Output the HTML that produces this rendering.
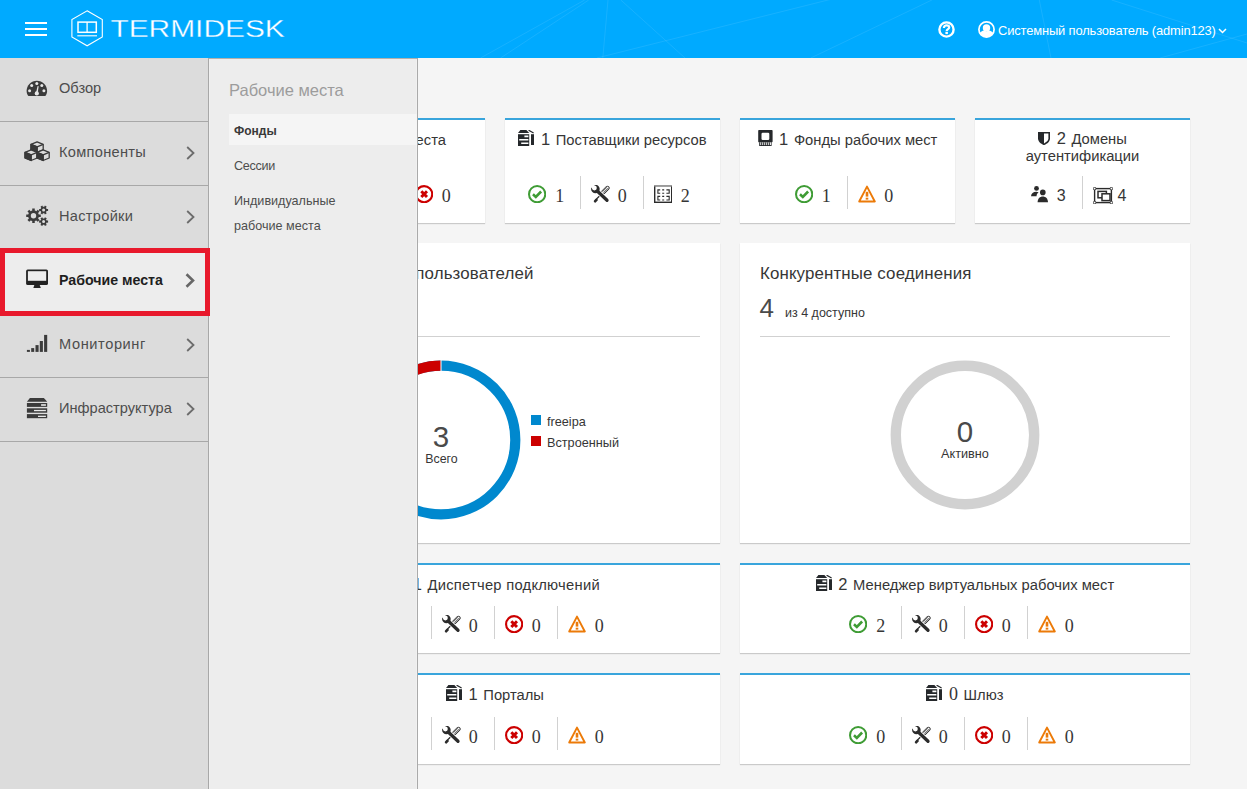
<!DOCTYPE html>
<html lang="ru">
<head>
<meta charset="utf-8">
<title>Termidesk</title>
<style>
*{box-sizing:border-box;margin:0;padding:0}
html,body{width:1247px;height:789px;overflow:hidden}
body{background:#f5f5f5;font-family:"Liberation Sans",sans-serif;color:#363636;position:relative;font-size:14px}
.abs{position:absolute}
/* header */
#hdr{position:absolute;left:0;top:0;width:1247px;height:58px;background:#00aaff;overflow:hidden}
#hdr .burger{position:absolute;left:25px;top:22px;width:22px;height:14px}
#hdr .burger i{position:absolute;left:0;width:22px;height:2px;background:#fff}
#hdr .user{position:absolute;left:998px;top:22px;color:#fff;font-size:12.900px;line-height:18px;white-space:nowrap;letter-spacing:-.13px}
/* sidebar */
#side{position:absolute;left:0;top:58px;width:209px;height:731px;background:#dcdcdc;border-right:1px solid #a8a8a8}
#side .it{position:absolute;left:0;width:208px;height:64px;border-bottom:1px solid #a8a8a8}
#side .it span{position:absolute;left:59px;top:19px;line-height:22px;font-size:14.6px;color:#4d4d4d;white-space:nowrap}
#side .it.act{background:#ededed}
#side .it.act span{font-weight:bold;color:#1e1e1e;font-size:14.2px}
#side .it svg.ic{position:absolute;left:25px;top:19px}
#side .it svg.ch{position:absolute;left:186px;top:24px}
#redbox{position:absolute;left:0;top:248px;width:210px;height:68px;border:5px solid #e8192c}
/* flyout */
#fly{position:absolute;left:209px;top:58px;width:209px;height:731px;background:#ededed;border-right:1px solid #aaa;box-shadow:inset 0 1px 0 #b4b0ac,inset -1px 0 0 #f1f1f1,inset 1px 0 0 #f1f1f1}
#fly h3{position:absolute;left:20px;top:21px;font-weight:normal;font-size:16.5px;line-height:22px;color:#9c9c9c;white-space:nowrap}
#fly .fi{position:absolute;left:20px;width:188px;font-size:12.6px;line-height:25px;color:#4d4d4d;padding-left:5px}
#fly .fi.sel{background:#f5f5f5;font-weight:bold;color:#393939}
/* main */
#main{position:absolute;left:418px;top:58px;width:829px;height:731px;overflow:hidden}
#main .in{position:absolute;left:-418px;top:-58px;width:1247px;height:789px}
.card{position:absolute;background:#fff;box-shadow:0 1px 1px rgba(3,3,3,.175)}
.card.acc{border-top:2px solid #39a5dc}
.card .t{position:absolute;left:0;right:0;text-align:center;font-size:14.75px;line-height:17px;color:#363636;white-space:nowrap}
.card .t b{font-weight:normal;font-size:16.500px;margin-right:1.500px}

.t svg{vertical-align:baseline;position:relative;top:1px;margin-right:6.500px}
.cnt{position:absolute;left:-1px;right:0;display:flex;justify-content:center;height:33px}
.n{position:relative;width:63px;height:33px;border-left:1px solid #d1d1d1}
.n:first-child{width:62px;border-left:0}
.n svg{position:absolute;left:10px;top:9px}
.n:first-child svg{left:10px}
.n span{position:absolute;left:36.800px;top:9px;font-family:"Liberation Serif",serif;font-size:18px;line-height:22px;color:#363636}
.n:first-child span{left:37.300px}
.n span.ss{font-family:"Liberation Sans",sans-serif;font-size:16px;top:8.700px}
.big{position:absolute;font-size:16.9px;letter-spacing:.12px;line-height:22px;color:#363636;white-space:nowrap}
.hr{position:absolute;height:1px;background:#d1d1d1}
.lt{font-weight:normal;color:#4a4a4a}
</style>
</head>
<body>
<svg width="0" height="0" style="position:absolute">
<defs>
<symbol id="i-ok" viewBox="0 0 18 18"><circle cx="9" cy="9" r="8" fill="none" stroke="#3f9c35" stroke-width="2"/><path d="M4.900 9.100l2.800 2.700 5.200-5.400" fill="none" stroke="#3f9c35" stroke-width="2.500"/></symbol>
<symbol id="i-err" viewBox="0 0 18 18"><circle cx="9" cy="9" r="7.950" fill="none" stroke="#cc0000" stroke-width="2.100"/><path d="M6.200 6.200l5.600 5.600M11.800 6.200l-5.600 5.600" fill="none" stroke="#cc0000" stroke-width="2.900"/></symbol>
<symbol id="i-warn" viewBox="0 0 18 18"><path d="M9 1.600L16.800 16.500H1.200Z" fill="none" stroke="#ec7a08" stroke-width="1.900" stroke-linejoin="round"/><path d="M9 6.800v4.800" stroke="#ec7a08" stroke-width="2.600" fill="none"/><rect x="7.700" y="12.700" width="2.600" height="1.900" fill="#ec7a08"/></symbol>
<symbol id="i-tools" viewBox="0 0 19 18"><g stroke-linecap="round" fill="none"><path d="M11.500 8L5 14.500" stroke="#2b2b2b" stroke-width="1.300"/><path d="M5.400 14.900L4.200 16.200" stroke="#2b2b2b" stroke-width="2.700"/><path d="M12.400 7L16.400 3" stroke="#2b2b2b" stroke-width="4.400"/><path d="M12.300 7.100L16.300 3.100" stroke="#fff" stroke-width="2.800"/><path d="M11.600 6.500L15.600 2.500M12.500 7.400L16.500 3.400M13.400 8.300L17.200 4.500" stroke="#2b2b2b" stroke-width=".7"/><path d="M6.500 6.200L16 15.300" stroke="#fff" stroke-width="5"/><path d="M6.500 6.200L16 15.300" stroke="#2b2b2b" stroke-width="3.300"/></g><circle cx="4.400" cy="4" r="4.300" fill="#2b2b2b"/><circle cx="3.400" cy="3" r="2.400" fill="#fff"/><path d="M3.600 3.200L-1 -1.400" stroke="#fff" stroke-width="3.600" fill="none"/></symbol>
<symbol id="i-table" viewBox="0 0 18.400 18"><rect x=".7" y=".7" width="17" height="16.600" fill="none" stroke="#2b2b2b" stroke-width="1.400"/><path d="M0 .8h18.400" stroke="#9a9a9a" stroke-width="1.600"/><path d="M6.200 4.900H3.900V8.200H6.200M8.200 4.900h2M8.200 8.200h2M12.400 4.900H15.200V8.200H12.400M6.200 11.400H3.900V15H6.200M8.200 11.400h2M8.200 15h2M12.400 11.400H15.200V15H12.400" fill="none" stroke="#2b2b2b" stroke-width="1.100"/></symbol>
<symbol id="i-srv" viewBox="0 0 16 16"><path d="M2.400 0h6l2.800 3H0z" fill="#25282b"/><path d="M0 4.200h11.200V16H0z" fill="#25282b"/><path d="M6.400 5.400h4v1.800h-4zM1.200 9h9.200v1.600H1.200zM3.200 12.400h7.200V14H3.200z" fill="#fff"/><path d="M10.600 .2L15.600 3" stroke="#25282b" stroke-width="1.200" fill="none"/><path d="M13 4.200h3V15h-3z" fill="#25282b"/></symbol>
<symbol id="i-mem" viewBox="0 0 15 16"><rect x=".2" y="0" width="14.400" height="12.400" rx=".8" fill="#25282b"/><rect x="3.500" y="2.700" width="7.800" height="7.200" rx="1.200" fill="#fff"/><path d="M1.200 12.400h12.400V16H1.200z" fill="#25282b"/><path d="M2.700 12.400v2.700M4.700 12.400v2.700M6.700 12.400v2.700M8.700 12.400v2.700M10.700 12.400v2.700M12.500 12.400v2.700" stroke="#fff" stroke-width=".9"/></symbol>
<symbol id="i-shield" viewBox="0 0 12 13.200"><path d="M0 0h12v6.500c0 3.200-3 5.300-6 6.700-3-1.400-6-3.500-6-6.700z" fill="#25282b"/><path d="M6 1.600h4.400v5c0 2-1.900 3.500-4.400 4.800z" fill="#fff"/></symbol>
<symbol id="i-users" viewBox="0 0 17 16.600"><circle cx="5.500" cy="2.400" r="2.400" fill="#2b2b2b"/><path d="M0 10.200c.3-2.800 2.200-4.400 5.200-4.400.9 0 1.700.2 2.400.5-1.600 1-2.100 2.800-2 3.900z" fill="#2b2b2b"/><circle cx="11.800" cy="6.400" r="2.800" fill="#2b2b2b"/><path d="M6.600 16.600c0-4 2.300-6 5.200-6s5.200 2 5.200 6z" fill="#2b2b2b"/></symbol>
<symbol id="i-vm" viewBox="0 0 20 17.200"><rect x="1.600" y="1.600" width="16.800" height="14" fill="none" stroke="#2b2b2b" stroke-width="1.400"/><g fill="#fff" stroke="#2b2b2b" stroke-width=".9"><circle cx="1.600" cy="1.600" r="1.300"/><circle cx="18.400" cy="1.600" r="1.300"/><circle cx="1.600" cy="15.600" r="1.300"/><circle cx="18.400" cy="15.600" r="1.300"/></g><rect x="5" y="4.400" width="8.400" height="6.400" fill="none" stroke="#2b2b2b" stroke-width="1.500"/><rect x="9" y="6.800" width="8" height="6.800" fill="#fff" stroke="#2b2b2b" stroke-width="1.500"/></symbol>
<symbol id="i-chev" viewBox="0 0 9 14"><path d="M1.200 1l6.300 6-6.300 6" fill="none" stroke="#6c6c6c" stroke-width="1.800"/></symbol>
</defs>
</svg>

<div id="main"><div class="in">

<div class="card acc" style="left:270px;top:118px;width:215px;height:105px">
  <div class="t" style="top:9px;left:-3px"><svg width="16" height="16"><use href="#i-srv"/></svg><b>3</b> Рабочие места</div>
  <div class="cnt" style="top:56px;left:-9px"><div class="n"><svg width="18.300" height="18.300"><use href="#i-ok"/></svg><span>3</span></div><div class="n"><svg width="19" height="18"><use href="#i-tools"/></svg><span>0</span></div><div class="n"><svg width="18.300" height="18.300"><use href="#i-err"/></svg><span>0</span></div></div>
</div>
<div class="card acc" style="left:505px;top:118px;width:215px;height:105px">
  <div class="t" style="top:9px"><svg width="16" height="16"><use href="#i-srv"/></svg><b>1</b> Поставщики ресурсов</div>
  <div class="cnt" style="top:56px"><div class="n"><svg width="18.300" height="18.300"><use href="#i-ok"/></svg><span>1</span></div><div class="n"><svg width="19" height="18"><use href="#i-tools"/></svg><span>0</span></div><div class="n"><svg width="18.400" height="18" style="top:9px"><use href="#i-table"/></svg><span>2</span></div></div>
</div>
<div class="card acc" style="left:740px;top:118px;width:215px;height:105px">
  <div class="t" style="top:9px"><svg width="15" height="16"><use href="#i-mem"/></svg><b>1</b> Фонды рабочих мест</div>
  <div class="cnt" style="top:56px"><div class="n"><svg width="18.300" height="18.300"><use href="#i-ok"/></svg><span>1</span></div><div class="n"><svg width="18" height="18" style="top:8.500px"><use href="#i-warn"/></svg><span>0</span></div></div>
</div>
<div class="card acc" style="left:975px;top:118px;width:215px;height:105px">
  <div class="t" style="top:10px"><svg width="12" height="13.200"><use href="#i-shield"/></svg><b>2</b> Домены<br>аутентификации</div>
  <div class="cnt" style="top:56px"><div class="n"><svg width="17" height="16.600" style="left:11px;top:10.400px"><use href="#i-users"/></svg><span class="ss">3</span></div><div class="n"><svg width="20" height="17.200" style="left:10.500px;top:11px"><use href="#i-vm"/></svg><span class="ss" style="left:35px">4</span></div></div>
</div>

<div class="card" style="left:270px;top:243px;width:450px;height:300px">
  <div class="big" style="right:186.500px;top:20px">Распределение пользователей</div>
  <div class="hr" style="left:20px;top:93px;width:410px"></div>
  <svg class="abs" style="left:91px;top:117px" width="160" height="160" viewBox="-80 -80 160 160">
    <circle r="74.300" fill="none" stroke="#0088ce" stroke-width="10.200"/>
    <path d="M0 -74.300A74.300 74.300 0 0 0 -64.350 37.150" fill="none" stroke="#cc0000" stroke-width="10.200"/>
    <path d="M0 -80v14" stroke="#fff" stroke-width="1"/>
  </svg>
  <div class="abs lt" style="left:141px;top:178px;width:60px;text-align:center;font-size:29.500px;line-height:32px">3</div>
  <div class="abs" style="left:141.500px;top:209px;width:60px;text-align:center;font-size:12.400px;line-height:14px">Всего</div>
  <div class="abs" style="left:261px;top:172px;width:10px;height:10px;background:#0088ce"></div>
  <div class="abs" style="left:277px;top:172px;font-size:12.700px;line-height:14px">freeipa</div>
  <div class="abs" style="left:261px;top:193px;width:10px;height:10px;background:#cc0000"></div>
  <div class="abs" style="left:277px;top:193px;font-size:12.700px;line-height:14px">Встроенный</div>
</div>
<div class="card" style="left:740px;top:243px;width:450px;height:300px">
  <div class="big" style="left:20px;top:20px">Конкурентные соединения</div>
  <div class="abs lt" style="left:19.500px;top:49.500px;font-size:26px;line-height:30px">4</div>
  <div class="abs" style="left:45px;top:62.700px;font-size:12.500px;line-height:14px;white-space:nowrap">из 4 доступно</div>
  <div class="hr" style="left:20px;top:93px;width:410px"></div>
  <svg class="abs" style="left:150px;top:117px" width="150" height="150" viewBox="-75 -75 150 150">
    <circle r="69.200" fill="none" stroke="#d1d1d1" stroke-width="10.400"/>
  </svg>
  <div class="abs lt" style="left:195px;top:172.800px;width:60px;text-align:center;font-size:29.500px;line-height:32px">0</div>
  <div class="abs" style="left:185px;top:204px;width:80px;text-align:center;font-size:12.700px;line-height:14px">Активно</div>
</div>

<div class="card acc" style="left:270px;top:563px;width:450px;height:90px">
  <div class="t" style="top:9px"><svg width="16" height="16"><use href="#i-srv"/></svg><b>1</b> <span style="letter-spacing:.25px">Диспетчер подключений</span></div>
  <div class="cnt" style="top:41px"><div class="n"><svg width="18.300" height="18.300"><use href="#i-ok"/></svg><span>1</span></div><div class="n"><svg width="19" height="18"><use href="#i-tools"/></svg><span>0</span></div><div class="n"><svg width="18.300" height="18.300"><use href="#i-err"/></svg><span>0</span></div><div class="n"><svg width="18" height="18" style="top:8.500px"><use href="#i-warn"/></svg><span>0</span></div></div>
</div>
<div class="card acc" style="left:740px;top:563px;width:450px;height:90px">
  <div class="t" style="top:9px"><svg width="16" height="16"><use href="#i-srv"/></svg><b>2</b> Менеджер виртуальных рабочих мест</div>
  <div class="cnt" style="top:41px"><div class="n"><svg width="18.300" height="18.300"><use href="#i-ok"/></svg><span>2</span></div><div class="n"><svg width="19" height="18"><use href="#i-tools"/></svg><span>0</span></div><div class="n"><svg width="18.300" height="18.300"><use href="#i-err"/></svg><span>0</span></div><div class="n"><svg width="18" height="18" style="top:8.500px"><use href="#i-warn"/></svg><span>0</span></div></div>
</div>
<div class="card acc" style="left:270px;top:673px;width:450px;height:91px">
  <div class="t" style="top:9px"><svg width="16" height="16"><use href="#i-srv"/></svg><b>1</b> Порталы</div>
  <div class="cnt" style="top:42px"><div class="n"><svg width="18.300" height="18.300"><use href="#i-ok"/></svg><span>1</span></div><div class="n"><svg width="19" height="18"><use href="#i-tools"/></svg><span>0</span></div><div class="n"><svg width="18.300" height="18.300"><use href="#i-err"/></svg><span>0</span></div><div class="n"><svg width="18" height="18" style="top:8.500px"><use href="#i-warn"/></svg><span>0</span></div></div>
</div>
<div class="card acc" style="left:740px;top:673px;width:450px;height:91px">
  <div class="t" style="top:9px"><svg width="16" height="16"><use href="#i-srv"/></svg><b style="font-family:'Liberation Serif',serif;font-size:18px">0</b> Шлюз</div>
  <div class="cnt" style="top:42px"><div class="n"><svg width="18.300" height="18.300"><use href="#i-ok"/></svg><span>0</span></div><div class="n"><svg width="19" height="18"><use href="#i-tools"/></svg><span>0</span></div><div class="n"><svg width="18.300" height="18.300"><use href="#i-err"/></svg><span>0</span></div><div class="n"><svg width="18" height="18" style="top:8.500px"><use href="#i-warn"/></svg><span>0</span></div></div>
</div>

</div></div>

<div id="hdr">
  <div class="burger"><i style="top:0"></i><i style="top:6px"></i><i style="top:12px"></i></div>
  <svg class="abs" style="left:66px;top:6px" width="230" height="46" viewBox="66 6 230 46">
    <path d="M87.100 10.800L102.300 19.500V37L87.100 45.800L71.900 37V19.500Z" fill="none" stroke="#fff" stroke-width="1.100"/>
    <rect x="78" y="22.100" width="18.300" height="10.200" fill="none" stroke="#fff" stroke-width="1.500"/>
    <path d="M87.100 22v10.400" stroke="#fff" stroke-width="1.300"/>
    <path d="M77.300 35.800h19.700" stroke="#fff" stroke-width="1.100"/>
    <text x="110.400" y="36.800" font-family="Liberation Sans, sans-serif" font-size="23" fill="#fff" stroke="#00aaff" stroke-width=".3" textLength="174.400" lengthAdjust="spacingAndGlyphs">TERMIDESK</text>
  </svg>
  <svg class="abs" style="left:938px;top:21px" width="17" height="17" viewBox="0 0 17 17"><circle cx="8.500" cy="8.500" r="7.100" fill="none" stroke="#fff" stroke-width="2.400"/><path d="M5.900 6.900c0-1.500 1.100-2.500 2.700-2.500s2.600.9 2.600 2.200c0 1.600-2.500 1.500-2.500 3.300" fill="none" stroke="#fff" stroke-width="2.200"/><rect x="7.400" y="10.800" width="2.500" height="2.300" fill="#fff"/></svg>
  <svg class="abs" style="left:978px;top:21px" width="17" height="17" viewBox="0 0 17 17"><circle cx="8.500" cy="8.500" r="7.600" fill="none" stroke="#fff" stroke-width="1.700"/><circle cx="8.500" cy="6.900" r="3.700" fill="#fff"/><path d="M2 11.700c1-1.100 2.500-1.800 4-2.200 1.500.9 3.500.9 5 0 1.500.4 3 1.100 4 2.200-1.200 2.800-3.600 4.500-6.500 4.500s-5.300-1.700-6.500-4.500z" fill="#fff"/></svg>
  <svg class="abs" style="left:1218px;top:28px" width="9" height="6" viewBox="0 0 9 6"><path d="M1 1l3.500 3.500L8 1" fill="none" stroke="#fff" stroke-width="1.500"/></svg>
  <svg class="abs" style="left:300px;top:0" width="947" height="58" viewBox="300 0 947 58"><g stroke="#fff" stroke-opacity=".09" stroke-width="1" fill="none"><path d="M480.500 58L584.700 0M500.500 58L588.700 0M602.800 58L608 0M620.800 0L685 58M596.800 58L840 -3M810.800 58L931.900 0M1039.300 0L1051 58M1111.600 0L1247 43M1160 58L1247 34"/></g></svg>
  <div class="user">Системный пользователь (admin123)</div>
</div>

<div id="side">
  <div class="it" style="top:0"><svg class="abs" style="left:26px;top:22px" width="22" height="17" viewBox="-0.600 -0.800 22 17"><path d="M1.800 15.200C.700 13.800 0 12.100 0 10.200 0 4.600 4.600 0 10.250 0S20.500 4.600 20.500 10.200c0 1.900-.700 3.600-1.800 5z" fill="#3b3b3b"/><g fill="#e8e8e8"><circle cx="3" cy="9.900" r="1.500"/><circle cx="5.100" cy="4.800" r="1.500"/><circle cx="10.200" cy="2.700" r="1.500"/><circle cx="15.200" cy="4.800" r="1.500"/><circle cx="17.300" cy="9.900" r="1.500"/><circle cx="10.200" cy="12.600" r="2.100"/><path d="M9.300 12.400l1.700-7.200 1.100.3-1.100 7.200z"/></g></svg><span>Обзор</span></div>
  <div class="it" style="top:64px"><svg class="abs" style="left:24px;top:19px" width="26" height="22" viewBox="-0.900 -0.800 26 22"><path d="M12.2 0L18.299999999999997 2.5V8.1L12.2 10.6L6.1 8.1V2.5Z" fill="#dcdcdc" stroke="#393939" stroke-width="1.300" stroke-linejoin="round"/><path d="M6.1 2.5L12.2 5.0V10.6L6.1 8.1Z" fill="#393939" stroke="#393939" stroke-width="1.300" stroke-linejoin="round"/><path d="M6.1 2.5L12.2 5.0L18.299999999999997 2.5M12.2 5.0V10.6" fill="none" stroke="#393939" stroke-width="1.300" stroke-linejoin="round"/><path d="M6.2 8.1L12.3 10.6V16.2L6.2 18.7L0.10000000000000053 16.2V10.6Z" fill="#dcdcdc" stroke="#393939" stroke-width="1.300" stroke-linejoin="round"/><path d="M0.10000000000000053 10.6L6.2 13.1V18.7L0.10000000000000053 16.2Z" fill="#393939" stroke="#393939" stroke-width="1.300" stroke-linejoin="round"/><path d="M0.10000000000000053 10.6L6.2 13.1L12.3 10.6M6.2 13.1V18.7" fill="none" stroke="#393939" stroke-width="1.300" stroke-linejoin="round"/><path d="M18.2 8.1L24.299999999999997 10.6V16.2L18.2 18.7L12.1 16.2V10.6Z" fill="#dcdcdc" stroke="#393939" stroke-width="1.300" stroke-linejoin="round"/><path d="M12.1 10.6L18.2 13.1V18.7L12.1 16.2Z" fill="#393939" stroke="#393939" stroke-width="1.300" stroke-linejoin="round"/><path d="M12.1 10.6L18.2 13.1L24.299999999999997 10.6M18.2 13.1V18.7" fill="none" stroke="#393939" stroke-width="1.300" stroke-linejoin="round"/></svg><span style="letter-spacing:.3px">Компоненты</span><svg class="ch" width="9" height="14"><use href="#i-chev"/></svg></div>
  <div class="it" style="top:128px"><svg class="abs" style="left:25px;top:19px" width="24" height="22" viewBox="25 205 24 22"><path fill-rule="evenodd" fill="#3b3b3b" d="M38.49 213.73L38.75 214.54L40.79 214.53L40.79 217.07L38.75 217.06L38.49 217.87L38.10 218.62L39.55 220.06L37.76 221.85L36.32 220.40L35.57 220.79L34.76 221.05L34.77 223.09L32.23 223.09L32.24 221.05L31.43 220.79L30.68 220.40L29.24 221.85L27.45 220.06L28.90 218.62L28.51 217.87L28.25 217.06L26.21 217.07L26.21 214.53L28.25 214.54L28.51 213.73L28.90 212.98L27.45 211.54L29.24 209.75L30.68 211.20L31.43 210.81L32.24 210.55L32.23 208.51L34.77 208.51L34.76 210.55L35.57 210.81L36.32 211.20L37.76 209.75L39.55 211.54L38.10 212.98ZM36.20 215.80A2.7 2.7 0 1 0 30.80 215.80A2.7 2.7 0 1 0 36.20 215.80ZM46.37 208.40L46.64 209.01L48.08 208.95L48.08 211.05L46.64 210.99L46.37 211.60L45.98 212.14L46.75 213.35L44.93 214.40L44.27 213.13L43.60 213.20L42.93 213.13L42.27 214.40L40.45 213.35L41.22 212.14L40.83 211.60L40.56 210.99L39.12 211.05L39.12 208.95L40.56 209.01L40.83 208.40L41.22 207.86L40.45 206.65L42.27 205.60L42.93 206.87L43.60 206.80L44.27 206.87L44.93 205.60L46.75 206.65L45.98 207.86ZM45.10 210.00A1.5 1.5 0 1 0 42.10 210.00A1.5 1.5 0 1 0 45.10 210.00ZM46.37 220.00L46.64 220.61L48.08 220.55L48.08 222.65L46.64 222.59L46.37 223.20L45.98 223.74L46.75 224.95L44.93 226.00L44.27 224.73L43.60 224.80L42.93 224.73L42.27 226.00L40.45 224.95L41.22 223.74L40.83 223.20L40.56 222.59L39.12 222.65L39.12 220.55L40.56 220.61L40.83 220.00L41.22 219.46L40.45 218.25L42.27 217.20L42.93 218.47L43.60 218.40L44.27 218.47L44.93 217.20L46.75 218.25L45.98 219.46ZM45.10 221.60A1.5 1.5 0 1 0 42.10 221.60A1.5 1.5 0 1 0 45.10 221.60Z"/></svg><span style="letter-spacing:.3px">Настройки</span><svg class="ch" width="9" height="14"><use href="#i-chev"/></svg></div>
  <div class="it act" style="top:192px"><svg class="abs" style="left:26px;top:19px" width="23" height="20" viewBox="26 269 23 20"><rect x="26.100" y="269.600" width="21.900" height="15.500" rx="1.600" fill="#222"/><rect x="27.900" y="271.200" width="18.300" height="9.600" fill="#ededed"/><path d="M34.400 285h5.300l1.100 2.900h-7.500z" fill="#222"/></svg><span>Рабочие места</span><svg class="ch" style="left:185px;top:23px" width="10.500" height="15" viewBox="0 0 10.500 15"><path d="M1.500 1.200l6.500 6.300-6.500 6.300" fill="none" stroke="#676767" stroke-width="2.600"/></svg></div>
  <div class="it" style="top:256px"><svg class="abs" style="left:26px;top:19px" width="23" height="20" viewBox="26 333 23 20"><g fill="#3b3b3b"><rect x="26.900" y="349.900" width="3" height="2"/><rect x="31.200" y="348.100" width="3" height="3.800"/><rect x="35.500" y="345.100" width="3.100" height="6.800"/><rect x="39.800" y="341" width="3.100" height="10.900"/><rect x="44.100" y="334.900" width="3.100" height="17"/></g></svg><span style="letter-spacing:.6px">Мониторинг</span><svg class="ch" width="9" height="14"><use href="#i-chev"/></svg></div>
  <div class="it" style="top:320px"><svg class="abs" style="left:26px;top:19px" width="23" height="22" viewBox="26 397 23 22"><g fill="#3b3b3b"><path d="M29.900 397.900h14l3.300 3.900H26.900z"/><rect x="26.900" y="403" width="20.300" height="3.900"/><rect x="26.900" y="408.300" width="20.300" height="4.400"/><rect x="26.900" y="414.100" width="20.300" height="4.100"/></g><g fill="#e8e8e8"><rect x="41.100" y="404.200" width="4.800" height="1.600"/><rect x="34" y="409.900" width="11.900" height="1.300"/><rect x="38" y="415.700" width="7.900" height="1.300"/></g></svg><span>Инфраструктура</span><svg class="ch" width="9" height="14"><use href="#i-chev"/></svg></div>
</div>
<div id="fly">
  <h3>Рабочие места</h3>
  <div class="fi sel" style="top:56px;height:31px;line-height:34px;font-size:12px">Фонды</div>
  <div class="fi" style="top:96px;letter-spacing:-.3px">Сессии</div>
  <div class="fi" style="top:131px">Индивидуальные<br>рабочие места</div>
</div>
<div id="redbox"></div>
</body>
</html>
